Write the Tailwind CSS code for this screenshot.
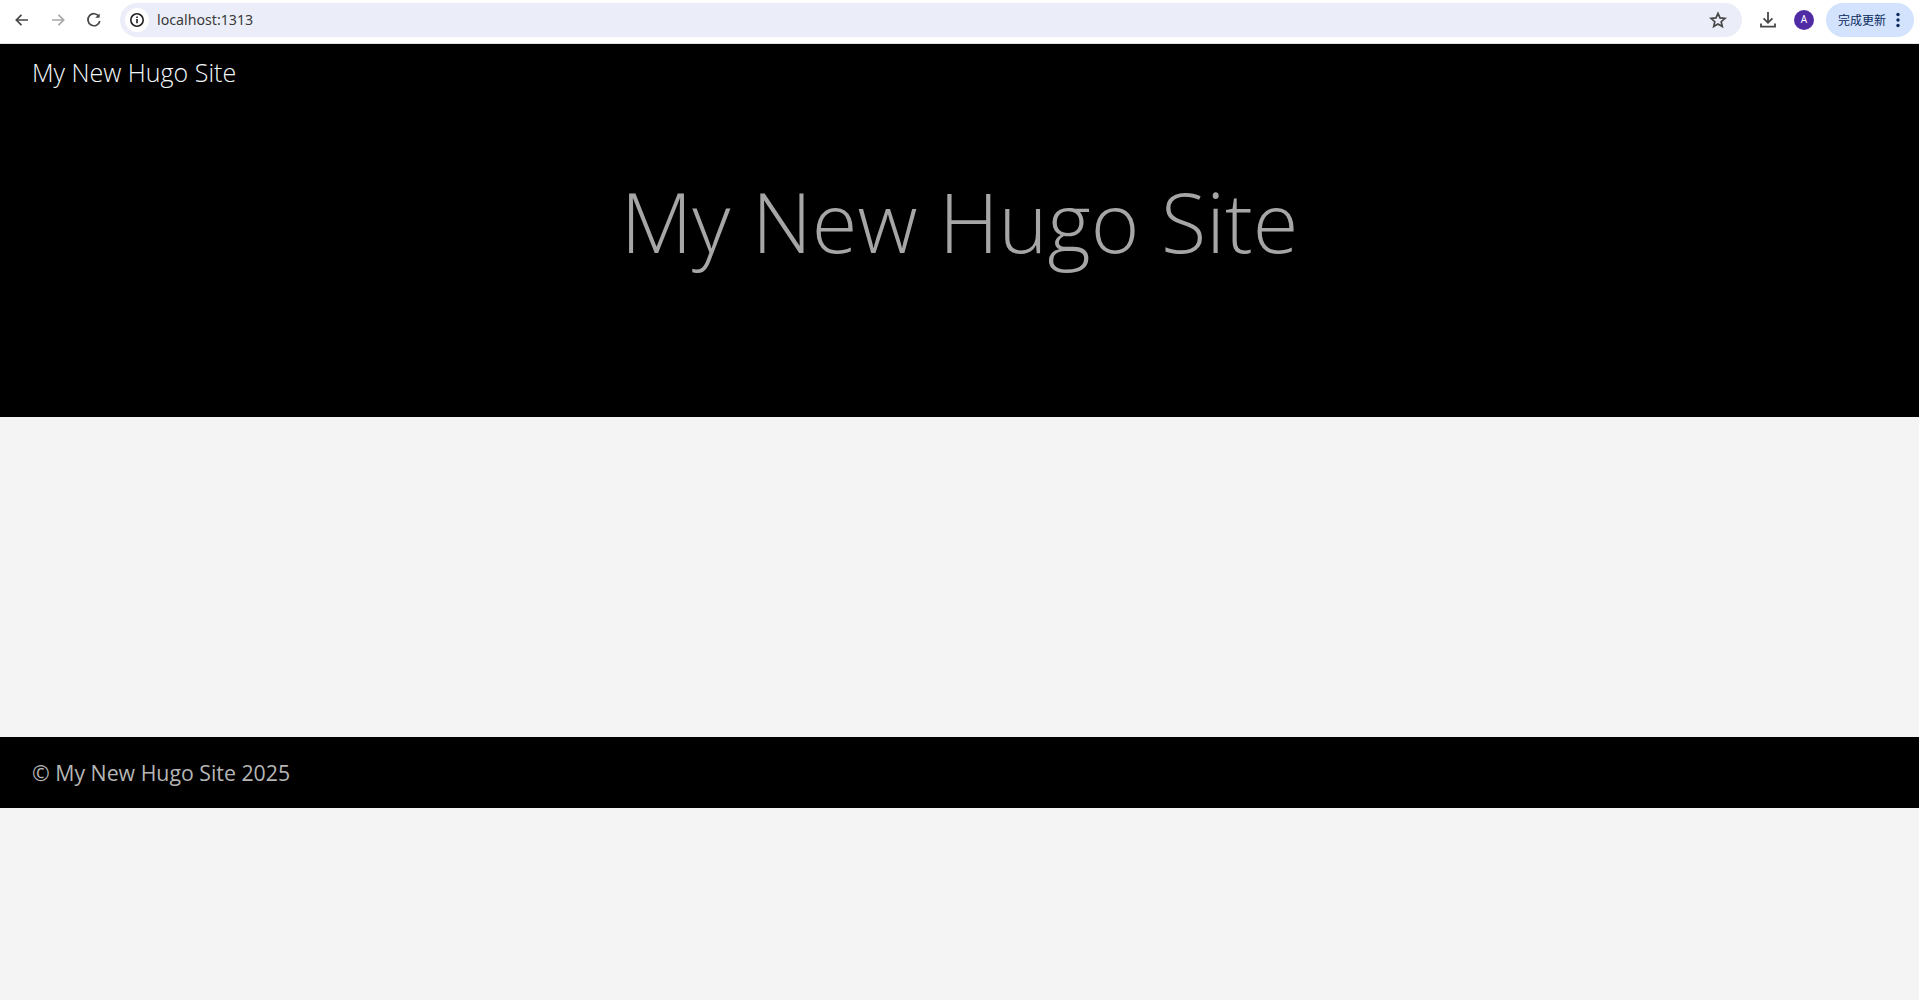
<!DOCTYPE html>
<html lang="en">

<head>
    <meta charset="UTF-8">
    <title>My New Hugo Site</title>
    <script src="https://cdn.jsdelivr.net/npm/@tailwindcss/browser@4"></script>
</head>

<body class="bg-[#f4f4f4] font-['Open_Sans','Noto_Sans',sans-serif]">

    <!-- Browser toolbar -->
    <div class="h-[44px] bg-white border-b border-[#e3e3e3] flex items-center pb-[4px] text-[#474747]">
        <div class="flex items-center w-[120px] pl-[12px] gap-[16px]">
            <svg class="w-[20px] h-[20px]" viewBox="0 0 20 20" fill="none" stroke="#474747" stroke-width="1.7"><path d="M16 10H4.5M9.5 4.8 4.3 10l5.2 5.2"/></svg>
            <svg class="w-[20px] h-[20px]" viewBox="0 0 20 20" fill="none" stroke="#a8a8a8" stroke-width="1.7"><path d="M4 10h11.5M10.5 4.8l5.2 5.2-5.2 5.2"/></svg>
            <svg class="w-[20px] h-[20px]" viewBox="0 0 20 20" fill="none" stroke="#474747" stroke-width="1.7"><path d="M15 6.5A6 6 0 1 0 15.8 11"/><path d="M15.6 3.4v4.4h-4.4z" fill="#474747" stroke="none"/></svg>
        </div>
        <div class="w-[1622px] h-[34px] rounded-full bg-[#ebeef8] flex items-center pl-[5px] pr-[15px]">
            <span class="w-[24px] h-[24px] rounded-full bg-white flex items-center justify-center">
                <svg class="w-[16px] h-[16px]" viewBox="0 0 16 16" fill="none" stroke="#1f1f1f" stroke-width="1.6"><circle cx="8" cy="8" r="6.2"/><path d="M8 7v4.2M8 4.4v1.7"/></svg>
            </span>
            <span class="ml-[8px] text-[14.2px] text-[#3a3a3a] font-['Noto_Sans',sans-serif]">localhost:1313</span>
            <svg class="ml-auto w-[18px] h-[18px]" viewBox="0 0 18 18" fill="none" stroke="#474747" stroke-width="1.7"><path d="m9 2.3 2 4.6 5 .5-3.8 3.3 1.1 4.9L9 13.1l-4.3 2.5 1.1-4.9L2 7.4l5-.5z"/></svg>
        </div>
        <svg class="ml-[16px] w-[20px] h-[20px] shrink-0" viewBox="0 0 20 20" fill="none" stroke="#474747" stroke-width="1.8"><path d="M10 2v10.5M5.6 8.4l4.4 4.4 4.4-4.4M3 13.5v3.2h14v-3.2"/></svg>
        <span class="ml-[16px] w-[20px] h-[20px] shrink-0 rounded-full bg-[#4f2ba6] text-white text-[10px] flex items-center justify-center font-['Noto_Sans',sans-serif]">A</span>
        <div class="ml-[12px] w-[88px] h-[34px] shrink-0 rounded-full bg-[#d3e3fd] flex items-center pl-[12px] text-[12px] text-[#0a2a5e] font-['Noto_Sans_CJK_SC',sans-serif]">
            完成更新
            <svg class="ml-[10px] w-[4px] h-[16px]" viewBox="0 0 4 16" fill="#0a2a5e"><circle cx="2" cy="2.5" r="1.7"/><circle cx="2" cy="8" r="1.7"/><circle cx="2" cy="13.5" r="1.7"/></svg>
        </div>
    </div>

    <!-- Header -->
    <header class="bg-black h-[373px]">
        <div class="pl-[32px] pt-[12px] text-[25px] leading-[32px] font-light text-[#f2f7fb]">My New Hugo Site</div>
        <h1 class="mt-[73px] text-center text-[83px] leading-[120px] font-light text-[#a6a6a6]">My New Hugo Site</h1>
    </header>

    <main class="h-[320px]"></main>

    <!-- Footer -->
    <footer class="bg-black h-[71px] flex items-center pl-[32px] text-[21.3px] text-[#b5b5b5]">
        © My New Hugo Site 2025
    </footer>

</body>

</html>
